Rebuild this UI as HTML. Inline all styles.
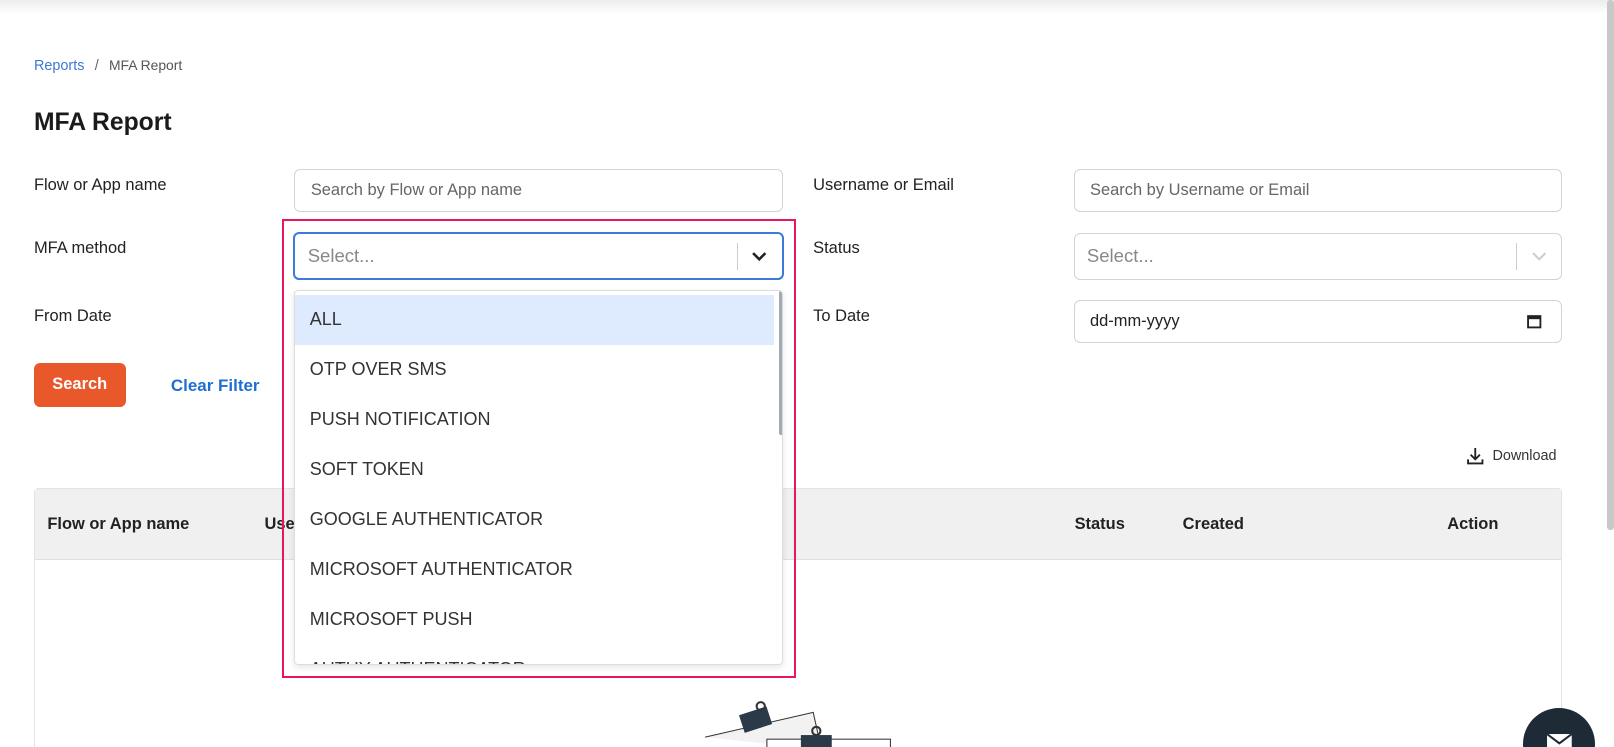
<!DOCTYPE html>
<html><head><style>
html,body{margin:0;padding:0;overflow:hidden;background:#fff}
body{width:1568px;height:726px;zoom:1.0293;position:relative;font-family:"Liberation Sans",sans-serif;color:#222;overflow:hidden}
.a{position:absolute}
.lbl{font-size:16px;color:#222}
.inp{position:absolute;border:1px solid #d4d4d4;border-radius:6px;background:#fff;box-sizing:border-box;font-size:16px;color:#666;padding-left:15px;display:flex;align-items:center}
.item{height:48.5px;line-height:48.5px;padding-left:14px;font-size:17.5px;color:#333}
</style></head><body>
<div class="a" style="left:0;top:0;width:1568px;height:14px;background:linear-gradient(#ececec,#fff)"></div>
<div class="a" style="left:1561px;top:0;width:7px;height:515px;background:#c8c8c8;border-radius:3px"></div>
<div class="a" style="left:33px;top:55px;font-size:14px"><span style="color:#3a7bd5">Reports</span><span style="color:#666;margin:0 10px">/</span><span style="color:#555;font-size:13.5px">MFA Report</span></div>
<div class="a" style="left:33px;top:106px;font-size:24px;font-weight:bold;color:#1b1b1b">MFA Report</div>
<div class="a lbl" style="left:33px;top:171px">Flow or App name</div>
<div class="inp" style="left:286px;top:164px;width:475px;height:42px">Search by Flow or App name</div>
<div class="a lbl" style="left:790px;top:171px">Username or Email</div>
<div class="inp" style="left:1043px;top:164px;width:475px;height:42px">Search by Username or Email</div>
<div class="a lbl" style="left:33px;top:232px">MFA method</div>
<div class="inp" style="left:285px;top:225px;width:477px;height:47px;border:2px solid #3a7bd5;color:#888;font-size:18px;padding-left:12px">Select...
<div class="a" style="left:429px;top:9px;width:1px;height:26px;background:#ccc"></div>
<svg class="a" style="left:443px;top:15px" width="16" height="14" viewBox="0 0 16 14"><path d="M2 4l6 6 6-6" stroke="#222" stroke-width="2.5" fill="none"/></svg></div>
<div class="a lbl" style="left:790px;top:232px">Status</div>
<div class="inp" style="left:1043px;top:226px;width:475px;height:46px;color:#888;font-size:18px;padding-left:12px">Select...
<div class="a" style="left:429px;top:9px;width:1px;height:26px;background:#ccc"></div>
<svg class="a" style="left:443px;top:15px" width="16" height="14" viewBox="0 0 16 14"><path d="M2 4l6 6 6-6" stroke="#ccc" stroke-width="2" fill="none"/></svg></div>
<div class="a lbl" style="left:33px;top:298px">From Date</div>
<div class="a lbl" style="left:790px;top:298px">To Date</div>
<div class="inp" style="left:1043px;top:291px;width:475px;height:42px;color:#222">dd-mm-yyyy
<svg class="a" style="left:439px;top:12px" width="16" height="16" viewBox="0 0 16 16"><rect x="2" y="3" width="12" height="11" fill="none" stroke="#222" stroke-width="1.8"/><rect x="2" y="3" width="12" height="3" fill="#222"/></svg></div>
<div class="a" style="left:33px;top:353px;width:89px;height:42px;background:#e9582a;border-radius:6px;color:#fff;font-weight:bold;font-size:16px;line-height:42px;text-align:center">Search</div>
<div class="a" style="left:166px;top:365px;color:#1f6fd1;font-weight:bold;font-size:16.5px">Clear Filter</div>
<div class="a" style="left:1424px;top:434px;font-size:14px;color:#333;display:flex;align-items:center;gap:8px"><svg width="18" height="18" viewBox="0 0 18 18"><path d="M9 1v11M4.5 7.5L9 12l4.5-4.5M2 12v4h14v-4" stroke="#222" stroke-width="1.8" fill="none"/></svg>Download</div>
<div class="a" style="left:33px;top:474px;width:1485px;height:260px;border:1px solid #e3e3e3;border-radius:4px;box-sizing:border-box"></div>
<div class="a" style="left:34px;top:475px;width:1483px;height:68px;background:#f0f0f0;border-bottom:1px solid #e0e0e0"></div>
<div class="a" style="top:500px;left:46px;font-weight:bold;font-size:16px">Flow or App name</div>
<div class="a" style="top:500px;left:257px;font-weight:bold;font-size:16px">User</div>
<div class="a" style="top:500px;left:1044px;font-weight:bold;font-size:16px">Status</div>
<div class="a" style="top:500px;left:1149px;font-weight:bold;font-size:16px">Created</div>
<div class="a" style="top:500px;left:1406px;font-weight:bold;font-size:16px">Action</div>
<svg class="a" style="left:680px;top:678px" width="190" height="48"><path d="M5 38L110 14l8 36" stroke="#333" fill="#f2f2f2" stroke-width="1"/><rect x="40" y="12" width="28" height="18" fill="#2b3a48" transform="rotate(-18 54 21)"/><circle cx="59" cy="8" r="4" fill="none" stroke="#333" stroke-width="2"/><rect x="65" y="40" width="120" height="20" fill="#fff" stroke="#333"/><rect x="98" y="36" width="30" height="20" fill="#2b3a48"/><circle cx="113" cy="32" r="4" fill="none" stroke="#333" stroke-width="2"/></svg>
<div class="a" style="left:1480px;top:688px;width:70px;height:38px;overflow:hidden"><div style="width:70px;height:70px;border-radius:35px;background:#1e2b37"></div></div>
<svg class="a" style="left:1502px;top:712px" width="26" height="14"><rect x="1" y="1" width="24" height="14" fill="#fff"/><path d="M1 1l12 9 12-9" stroke="#1e2b37" stroke-width="2" fill="none"/></svg>
<div class="a" style="left:274px;top:213px;width:499px;height:446px;border:2px solid #e8175d;box-sizing:border-box"></div>
<div class="a" style="left:286px;top:282px;width:475px;height:364px;background:#fff;border:1px solid #ddd;border-radius:4px;box-shadow:0 2px 6px rgba(0,0,0,.1);overflow:hidden;box-sizing:border-box">
<div style="height:4px"></div>
<div class="item" style="background:#deebff;margin-right:8px">ALL</div>
<div class="item">OTP OVER SMS</div>
<div class="item">PUSH NOTIFICATION</div>
<div class="item">SOFT TOKEN</div>
<div class="item">GOOGLE AUTHENTICATOR</div>
<div class="item">MICROSOFT AUTHENTICATOR</div>
<div class="item">MICROSOFT PUSH</div>
<div class="item">AUTHY AUTHENTICATOR</div>
<div class="a" style="left:470px;top:0;width:4px;height:140px;background:#a0aab5;border-radius:2px"></div>
</div>
</body></html>
